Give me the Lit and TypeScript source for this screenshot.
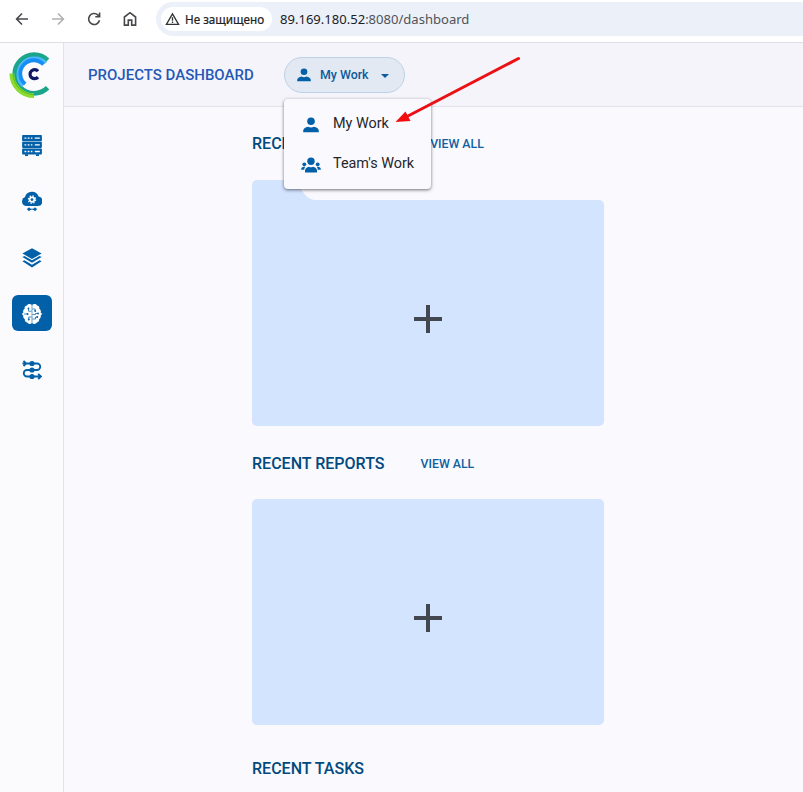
import { LitElement, html, css, svg } from "lit";
import { customElement } from "lit/decorators.js";

const person = html`<svg viewBox="0 0 16 16" width="100%" height="100%" fill="#0260a8">
  <circle cx="8" cy="4.300" r="3.800" /><path d="M.2 15.200v-1.500C.2 11.700 2.800 10.200 5 9.800q3 1.500 6 0c2.200.4 4.800 1.900 4.800 3.900v1.500z" /></svg>`;

const team = html`<svg viewBox="0 0 20 16" width="100%" height="100%" fill="#0260a8">
  <circle cx="10" cy="4.200" r="3.700" /><circle cx="3.300" cy="7.300" r="1.900" /><circle cx="16.700" cy="7.300" r="1.900" />
  <path d="M4 15.500v-2c0-2 2-3.300 4-3.800q2 1 4 0c2 .5 4 1.800 4 3.800v2zM.2 12.800v-.7c0-1.400 1.300-2.300 2.600-2.300h1.500c-.6.800-1 1.800-1.100 3zM19.800 12.800v-.7c0-1.400-1.300-2.300-2.600-2.300h-1.500c.6.800 1 1.800 1.100 3z" /></svg>`;

const servers = html`<svg viewBox="0 0 20 21" width="20" height="21">
  ${[0, 6.700, 13.400].map((y) => svg`<rect x=".1" y=${y} width="19.800" height="6.200" rx=".8" fill="#0260a8"/>
    <path d=${`M2.500 ${y + 3.100}h1.800M5.700 ${y + 3.100}h1.800M8.900 ${y + 3.100}h1.500M12.800 ${y + 3.100}h5`} stroke="#fff" stroke-width="1.300"/>`)}
  <path d="M3 20.100h3M14 20.100h3" stroke="#0260a8" stroke-width="1.600"/></svg>`;

const cloud = html`<svg viewBox="0 0 20 21" width="20" height="21">
  <path d="M4.500 15A4.600 4.600 0 0 1 3 6.100 7.100 7.100 0 0 1 16.600 5.500a4.800 4.800 0 0 1-1.100 9.500z" fill="#0260a8"/>
  <circle cx="10" cy="8.600" r="2.300" fill="none" stroke="#fff" stroke-width="1.700"/>
  <circle cx="10" cy="8.600" r="3.600" fill="none" stroke="#fff" stroke-width="1.300" stroke-dasharray="1.410 1.410"/>
  <path d="M5 18.200l2-2 2 2-2 2zM11 18.200l2-2 2 2-2 2z" fill="#0260a8"/><path d="M5.500 18.200h9" stroke="#0260a8" stroke-width="1"/></svg>`;

const layers = html`<svg viewBox="0 0 20 20" width="20" height="20" fill="#0260a8">
  <path d="M10 .2l9.600 5.300L10 11 .4 5.500zM.4 9l2-1.100L10 12.300l7.600-4.400 2 1.100L10 14.700zM.4 13.300l2-1.100L10 16.700l7.600-4.500 2 1.100L10 19.500z"/></svg>`;

const brain = html`<svg viewBox="0 0 22 20" width="22" height="20">
  <path d="M10.700.7C9-.3 6.700 0 6 1.500 4.300 1.700 3.300 3.100 3.700 4.700 2.300 5.700 1.800 7.300 2.300 8.700L.6 10l1.700 1.300c-.5 1.500.1 3 1.500 3.800-.2 1.800.7 3.200 2.300 3.400.9 1.500 3 1.800 4.600.8zM11.300.7C13-.3 15.300 0 16 1.500c1.700.2 2.700 1.600 2.300 3.200 1.400 1 1.900 2.600 1.400 4L21.400 10l-1.700 1.300c.5 1.500-.1 3-1.500 3.800.2 1.800-.7 3.200-2.300 3.400-.9 1.500-3 1.800-4.600.8z" fill="#fff"/>
  <g fill="none" stroke="#0260a8" stroke-width=".7"><path d="M10.500 7.200H7.500V4.500M3 10h3.500M10.500 13H7.800v2.700M11.500 5h2.700v2.500M11.500 10.500h3v-1h2.500M11.500 15h3v-2h2"/></g>
  <g fill="#0260a8"><circle cx="7.500" cy="4.500" r=".9"/><circle cx="6.500" cy="10" r="1"/><circle cx="7.800" cy="15.500" r=".9"/><circle cx="14.200" cy="7" r=".9"/><circle cx="17" cy="9.500" r=".9"/><circle cx="16.300" cy="13" r=".9"/></g></svg>`;

const flow = html`<svg viewBox="0 0 20 20" width="20" height="20" fill="none" stroke="#0260a8" stroke-width="1.800">
  <path d="M.5 3.500H15a3.200 3.200 0 0 1 0 6.500H5a3.200 3.200 0 0 0 0 6.500h14M1.500 .8l2.700 2.700L1.500 6.200M16.200 13.800l2.700 2.700-2.700 2.700"/>
  <g fill="#0260a8" stroke="none"><circle cx="10" cy="3.500" r="2.600"/><circle cx="10" cy="10" r="2.600"/><circle cx="10" cy="16.500" r="2.600"/></g></svg>`;

const logo = html`<svg viewBox="0 0 44 50" width="44" height="50" fill="none">
  <path d="M39.600 10.200A19.300 19.300 0 1 0 39.600 37.800" stroke="#1ba68c" stroke-width="4.800"/>
  <path d="M38 12.700A16.400 16.400 0 1 0 14.800 36" stroke="#4cb9ff" stroke-width="2.800"/>
  <path d="M35.500 14.500A13.400 13.400 0 1 0 17.200 34" stroke="#168ef5" stroke-width="3.800"/>
  <path d="M3.800 23.500A22.200 22.200 0 0 0 26 45.700" stroke="#8bdc30" stroke-width="4.800"/>
  <path d="M5 23.500A21 21 0 0 0 26 44.500" stroke="#5fb81e" stroke-width="1"/>
  <path d="M30 21.300A4.500 4.500 0 1 0 30 27.100" stroke="#101a63" stroke-width="3.200"/></svg>`;

@customElement("browser-bar")
class BrowserBar extends LitElement {
  static styles = css`
    :host { display: flex; align-items: center; height: 43px; box-sizing: border-box; border-bottom: 1px solid #dcdee3; background: #fff; padding: 0 0 4px 13px; flex: none; }
    .nav { width: 18px; height: 18px; margin-right: 18px; flex: none; }
    .url { flex: 1; height: 34px; margin-left: -1px; border-radius: 17px 0 0 17px; background: #ebf0f9; display: flex; align-items: center; padding-left: 5px; box-sizing: border-box; }
    .chip { display: flex; align-items: center; width: 111px; height: 24px; border-radius: 12px; background: #fff; padding-left: 4px; box-sizing: border-box; gap: 5px; white-space: nowrap; font: 11.700px "Noto Sans", sans-serif; color: #202124; -webkit-text-stroke: .2px #202124; }
    .address { margin-left: 8px; font: 13.050px "Noto Sans", sans-serif; color: #505358; white-space: nowrap; }
    .host { color: #202124; }
  `;
  render() {
    const icon = (d: string, color: string) => html`<svg class="nav" viewBox="0 0 18 18" fill="none" stroke=${color} stroke-width="1.600"><path d=${d} /></svg>`;
    return html`
      ${icon("M15 9H4M9 3.500L3.600 9 9 14.500", "#46484b")}
      ${icon("M3 9h11M9 3.500L14.400 9 9 14.500", "#b0b1b3")}
      ${icon("M14.500 10.300A5.500 5.500 0 1 1 13 5.100L14.500 6.600M14.600 2.500v4.300h-4.300", "#46484b")}
      ${icon("M3.400 15.100V7L9 2.700 14.600 7v8.100h-3.900v-5H7.300v5z", "#46484b")}
      <div class="url">
        <div class="chip">
          <svg viewBox="0 0 15 14" width="15" height="14" fill="none" stroke="#303236" stroke-width="1.300"><path d="M7.500 1.800L13.600 12.300H1.400zM7.500 5.200v3.500M7.500 9.500v1.400" /></svg>
          <span>Не защищено</span>
        </div>
        <div class="address"><span class="host">89.169.180.52</span>:8080/dashboard</div>
      </div>`;
  }
}

@customElement("side-nav")
class SideNav extends LitElement {
  static styles = css`
    :host { width: 64px; box-sizing: border-box; border-right: 1px solid #e1e2ea; background: #fbfbfe; display: flex; flex-direction: column; align-items: center; flex: none; }
    .logo { height: 50px; margin: 7px 0 27px; padding-right: 4px; }
    .item { width: 40px; height: 36px; display: flex; align-items: center; justify-content: center; margin-bottom: 20px; border-radius: 6px; }
    .active { background: #0260a8; }
    svg { display: block; }
    .item svg { margin-top: 1px; }
  `;
  render() {
    return html`<div class="logo">${logo}</div>
      <div class="item">${servers}</div>
      <div class="item">${cloud}</div>
      <div class="item">${layers}</div>
      <div class="item active">${brain}</div>
      <div class="item">${flow}</div>`;
  }
}

@customElement("app-root")
class AppRoot extends LitElement {
  static styles = css`
    :host { display: flex; flex-direction: column; position: relative; height: 792px; overflow: hidden; background: #faf9fe; font-family: Roboto, sans-serif; }
    .body { display: flex; flex: 1; min-height: 0; }
    .main { flex: 1; min-width: 0; display: flex; flex-direction: column; }
    .header { height: 64px; box-sizing: border-box; flex: none; background: #f5f4fa; border-bottom: 1px solid #e3e3eb; display: flex; align-items: center; padding-left: 24px; }
    .title { width: 196px; font-size: 15px; font-weight: 500; color: #2459b8; white-space: nowrap; }
    .picker { position: relative; width: 121px; height: 36px; box-sizing: border-box; border: 1px solid #bdd1e6; border-radius: 18px; background: #e2e9f2; display: flex; align-items: center; padding-left: 12px; color: #0b5b9e; font-size: 12.400px; font-weight: 500; }
    .small { width: 14px; height: 14px; margin-right: 9px; display: flex; }
    .caret { margin-left: 12px; margin-top: 2px; border: 4px solid transparent; border-top: 4px solid #0b5b9e; border-bottom: 0; }
    .menu { position: absolute; z-index: 1; left: -1px; top: 41px; width: 147px; height: 90px; box-sizing: border-box; padding-top: 5px; border-radius: 4px; background: #faf9fe; box-shadow: 0 1px 3px rgba(0,0,0,.45), 0 1px 5px rgba(0,0,0,.14); }
    .option { height: 40px; display: flex; align-items: center; padding-left: 17px; color: #25262b; font-size: 14.400px; font-weight: 400; white-space: nowrap; }
    .icon { width: 20px; height: 16px; display: flex; margin: 3px 12px 0 0; }
    .content { padding: 23px 0 0 188px; }
    .heading { display: flex; align-items: center; height: 26px; gap: 36px; font-size: 16.050px; font-weight: 500; color: #014a80; white-space: nowrap; }
    .all { font-size: 12.300px; color: #0f609f; padding-top: 1px; }
    .card { width: 352px; height: 226px; border-radius: 5px; background: #d3e4ff; display: flex; align-items: center; justify-content: center; }
    .card svg { display: block; margin-top: 12px; }
    .folder { margin: 24px 0 24px; width: 352px; }
    .folder .card { border-top-left-radius: 0; }
    .tab { display: block; }
    .reports { margin: 23px 0 30px; }
    .arrow { position: absolute; z-index: 2; left: 390px; top: 50px; pointer-events: none; }
  `;
  render() {
    const plus = html`<svg width="30" height="30" viewBox="0 0 30 30"><path d="M1 15h28M15 1v28" stroke="#43474f" stroke-width="4" /></svg>`;
    return html`
      <browser-bar></browser-bar>
      <div class="body">
        <side-nav></side-nav>
        <div class="main">
          <div class="header">
            <div class="title">PROJECTS DASHBOARD</div>
            <div class="picker">
              <span class="small">${person}</span>My Work<span class="caret"></span>
              <div class="menu">
                <div class="option"><span class="icon">${person}</span>My Work</div>
                <div class="option"><span class="icon">${team}</span>Team's Work</div>
              </div>
            </div>
          </div>
          <div class="content">
            <div class="heading">RECENT PROJECTS<span class="all">VIEW ALL</span></div>
            <div class="folder">
              <svg class="tab" width="62" height="20" viewBox="0 0 62 20"><path d="M0 20V5a5 5 0 0 1 5-5h34q5 0 7 5l2 3q7 11 14 12z" fill="#d3e4ff" /></svg>
              <div class="card">${plus}</div>
            </div>
            <div class="heading">RECENT REPORTS<span class="all">VIEW ALL</span></div>
            <div class="card reports">${plus}</div>
            <div class="heading">RECENT TASKS</div>
          </div>
        </div>
      </div>
      <svg class="arrow" width="135" height="80" viewBox="0 0 135 80"><path d="M128.500 8.500L18 66" stroke="#ec1015" stroke-width="3" stroke-linecap="round" /><path d="M5.500 72l10-10.500 5 9.500z" fill="#f20c10" /></svg>`;
  }
}
